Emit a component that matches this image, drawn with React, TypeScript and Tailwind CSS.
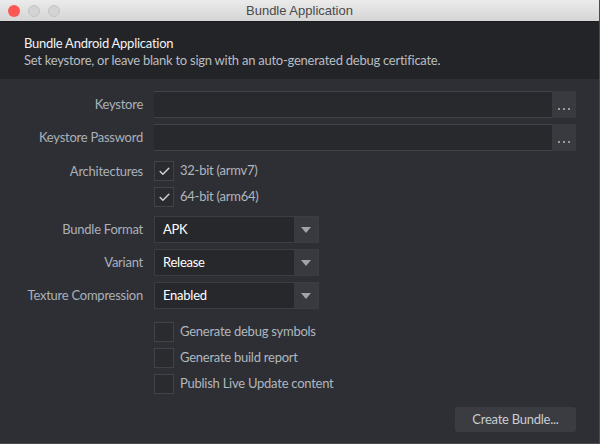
import { Check } from "lucide-react";

const font = { fontFamily: "Lato, 'Noto Sans', sans-serif", letterSpacing: "-0.25px" };

const Label = ({ children }: { children: string }) => (
  <div className="w-[143px] shrink-0 text-right text-[13px] text-[#a9b1b9]">{children}</div>
);

const FileField = () => (
  <div className="flex h-[27px] w-[422px]">
    <div className="flex-1 border-y border-[#414247] bg-[#28292d]" />
    <div className="flex w-[24px] items-center justify-center gap-[3px] bg-[#393a3f] pt-[8px]">
      <span className="h-[2px] w-[2px] bg-[#9a9b9e]" />
      <span className="h-[2px] w-[2px] bg-[#9a9b9e]" />
      <span className="h-[2px] w-[2px] bg-[#9a9b9e]" />
    </div>
  </div>
);

const Select = ({ value }: { value: string }) => (
  <div className="flex h-[27px] w-[165px] border border-[#3c3d42]">
    <div className="flex flex-1 items-center bg-[#27282c] pl-[8px] text-[13px] text-white">{value}</div>
    <div className="flex w-[24px] items-center justify-center bg-[#393a3f]">
      <svg width="10" height="6" viewBox="0 0 10 6">
        <path d="M0 0H10L5 6Z" fill="#a3a4a7" />
      </svg>
    </div>
  </div>
);

const Box = ({ checked, label }: { checked?: boolean; label: string }) => (
  <div className="flex items-center">
    <div className="flex h-[20px] w-[20px] items-center justify-center border border-[#414247] bg-[#2a2b2f]">
      {checked && <Check size={13} strokeWidth={2.75} color="#cfd0d2" />}
    </div>
    <span className="ml-[6px] text-[13px] text-[#afb7bf]">{label}</span>
  </div>
);

export default function App() {
  return (
    <div className="flex h-[444px] w-[600px] flex-col overflow-hidden border-r border-b border-[#4a4b4f] bg-[#2e2f34]" style={font}>
      <div className="relative flex h-[22px] shrink-0 items-center justify-center border-b border-[#1b1c1f] bg-gradient-to-b from-[#ebebeb] to-[#d5d5d5]">
        <div className="absolute left-[8px] top-[5px] flex gap-[8px]">
          <span className="h-[12px] w-[12px] rounded-full bg-[#fc5753]" />
          <span className="h-[12px] w-[12px] rounded-full border border-[#c4c4c4] bg-[#d4d4d4]" />
          <span className="h-[12px] w-[12px] rounded-full border border-[#c4c4c4] bg-[#d4d4d4]" />
        </div>
        <span className="text-[13px] tracking-normal text-[#4a4a4a]" style={{ fontFamily: "'Liberation Sans', sans-serif" }}>
          Bundle Application
        </span>
      </div>

      <div className="h-[57px] shrink-0 bg-[#222428] pl-[24px] pt-[13px] leading-[17px]">
        <div className="text-[13px] text-[#f2f2f2]">Bundle Android Application</div>
        <div className="text-[13px] text-[#b9bdc2]">Set keystore, or leave blank to sign with an auto-generated debug certificate.</div>
      </div>

      <div className="flex flex-col pt-[12px]">
        <div className="flex items-center gap-[11px]">
          <Label>Keystore</Label>
          <FileField />
        </div>
        <div className="mt-[6px] flex items-center gap-[11px]">
          <Label>Keystore Password</Label>
          <FileField />
        </div>
        <div className="mt-[10px] flex items-start gap-[11px]">
          <div className="pt-[1px]">
            <Label>Architectures</Label>
          </div>
          <div className="flex flex-col gap-[6px]">
            <Box checked label="32-bit (armv7)" />
            <Box checked label="64-bit (arm64)" />
          </div>
        </div>
        <div className="mt-[9px] flex items-center gap-[11px]">
          <Label>Bundle Format</Label>
          <Select value="APK" />
        </div>
        <div className="mt-[6px] flex items-center gap-[11px]">
          <Label>Variant</Label>
          <Select value="Release" />
        </div>
        <div className="mt-[6px] flex items-center gap-[11px]">
          <Label>Texture Compression</Label>
          <Select value="Enabled" />
        </div>
        <div className="mt-[13px] flex flex-col gap-[6px] pl-[154px]">
          <Box label="Generate debug symbols" />
          <Box label="Generate build report" />
          <Box label="Publish Live Update content" />
        </div>
        <div className="mt-[13px] flex justify-end pr-[23px]">
          <button className="h-[25px] w-[121px] rounded-[3px] bg-[#3a3c41] text-[13px] text-[#c9cdd1]">
            Create Bundle...
          </button>
        </div>
      </div>
    </div>
  );
}
